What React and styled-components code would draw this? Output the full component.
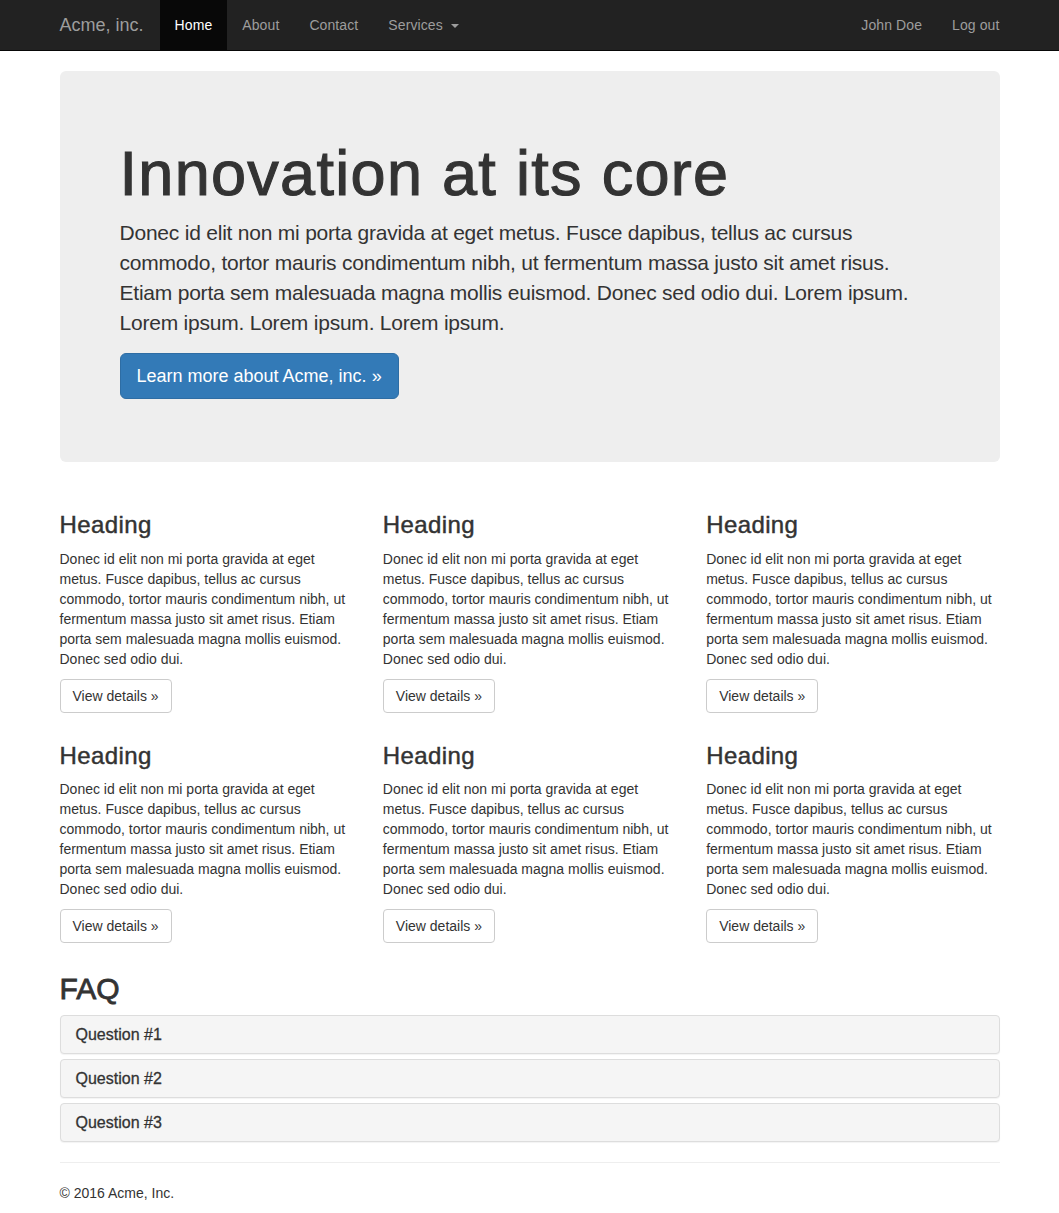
import React from "react";
import styled, { createGlobalStyle } from "styled-components";

const GlobalStyle = createGlobalStyle`
  * { box-sizing: border-box; }
  body {
    margin: 0;
    font-family: "Liberation Sans", Arial, Helvetica, sans-serif;
    font-size: 14px;
    line-height: 1.42857143;
    color: #333;
    background: #fff;
  }
`;

const Navbar = styled.nav`
  background: #222;
  border-bottom: 1px solid #080808;
  margin-bottom: 20px;
`;

const NavInner = styled.div`
  width: 970px;
  margin: 0 auto;
  padding: 0 15px;
  display: flex;
  height: 50px;
`;

const Brand = styled.a`
  font-size: 18px;
  line-height: 20px;
  padding: 15px 16px 15px 15px;
  margin-left: -15px;
  color: #9d9d9d;
  text-decoration: none;
`;

const NavList = styled.ul`
  display: flex;
  list-style: none;
  margin: 0;
  padding: 0;
  margin-left: ${(props) => (props.right ? "auto" : "0")};
  margin-right: ${(props) => (props.right ? "-15px" : "0")};
`;

const NavLink = styled.a`
  display: block;
  padding: 15px;
  line-height: 20px;
  letter-spacing: 0.1px;
  color: ${(props) => (props.$active ? "#fff" : "#9d9d9d")};
  background: ${(props) => (props.$active ? "#080808" : "transparent")};
  text-decoration: none;
`;

const Caret = styled.span`
  display: inline-block;
  width: 0;
  height: 0;
  margin-left: 4px;
  vertical-align: middle;
  border-top: 4px solid #9d9d9d;
  border-left: 4px solid transparent;
  border-right: 4px solid transparent;
`;

const Container = styled.div`
  width: 970px;
  margin: 0 auto;
  padding: 0 15px;
`;

const Jumbotron = styled.div`
  background: #eee;
  border-radius: 6px;
  padding: 48px 60px;
  margin-bottom: 30px;
`;

const Title = styled.h1`
  font-size: 63px;
  font-weight: 500;
  line-height: 1.1;
  letter-spacing: 1.3px;
  -webkit-text-stroke: 1.1px #333;
  margin: 20px 0 10px;
`;

const Lead = styled.p`
  font-size: 21px;
  font-weight: 300;
  line-height: 30px;
  letter-spacing: -0.22px;
  margin: 0 0 15px;
`;

const PrimaryButton = styled.a`
  display: inline-block;
  padding: 10px 16px;
  font-size: 18px;
  line-height: 1.3333333;
  letter-spacing: 0;
  border-radius: 6px;
  color: #fff;
  background: #337ab7;
  border: 1px solid #2e6da4;
  text-decoration: none;
`;

const Grid = styled.div`
  display: grid;
  grid-template-columns: repeat(3, 1fr);
  column-gap: 30px;
`;

const Col = styled.div``;

const Heading = styled.h3`
  font-size: 24px;
  font-weight: 500;
  line-height: 1.1;
  letter-spacing: 0.4px;
  -webkit-text-stroke: 0.45px #333;
  margin: 20px 0 10px;
`;

const Text = styled.p`
  margin: 0 0 10px;
`;

const DefaultButton = styled.a`
  display: inline-block;
  padding: 6px 12px;
  line-height: 20px;
  border: 1px solid #ccc;
  border-radius: 4px;
  background: #fff;
  color: #333;
  text-decoration: none;
`;

const SectionTitle = styled.h2`
  font-size: 30px;
  font-weight: 500;
  line-height: 1.1;
  -webkit-text-stroke: 0.8px #333;
  margin: 19px 0 10px;
`;

const PanelGroup = styled.div`
  display: flex;
  flex-direction: column;
  gap: 5px;
  margin-bottom: 20px;
`;

const Panel = styled.div`
  border: 1px solid #ddd;
  border-radius: 4px;
  background: #f5f5f5;
  box-shadow: 0 1px 1px rgba(0, 0, 0, 0.05);
  padding: 10px 15px;
`;

const PanelTitle = styled.h4`
  margin: 0;
  font-size: 16px;
  font-weight: 500;
  line-height: 17px;
  -webkit-text-stroke: 0.3px #333;
`;

const Rule = styled.hr`
  border: 0;
  border-top: 1px solid #eee;
  margin: 20px 0;
`;

const Footer = styled.footer`
  p { margin: 0 0 10px; }
`;

const blurb =
  "Donec id elit non mi porta gravida at eget metus. Fusce dapibus, tellus ac cursus commodo, tortor mauris condimentum nibh, ut fermentum massa justo sit amet risus. Etiam porta sem malesuada magna mollis euismod. Donec sed odio dui.";

const App = () => {
  return (
    <>
      <GlobalStyle />
      <Navbar>
        <NavInner>
          <Brand href="#">Acme, inc.</Brand>
          <NavList>
            <li><NavLink href="#" $active>Home</NavLink></li>
            <li><NavLink href="#">About</NavLink></li>
            <li><NavLink href="#">Contact</NavLink></li>
            <li><NavLink href="#">Services <Caret /></NavLink></li>
          </NavList>
          <NavList right>
            <li><NavLink href="#">John Doe</NavLink></li>
            <li><NavLink href="#">Log out</NavLink></li>
          </NavList>
        </NavInner>
      </Navbar>

      <Container>
        <Jumbotron>
          <Title>Innovation at its core</Title>
          <Lead>
            Donec id elit non mi porta gravida at eget metus. Fusce dapibus, tellus ac cursus
            commodo, tortor mauris condimentum nibh, ut fermentum massa justo sit amet risus.
            Etiam porta sem malesuada magna mollis euismod. Donec sed odio dui. Lorem ipsum.
            Lorem ipsum. Lorem ipsum. Lorem ipsum.
          </Lead>
          <Lead>
            <PrimaryButton href="#">Learn more about Acme, inc. »</PrimaryButton>
          </Lead>
        </Jumbotron>

        <Grid>
          {[0, 1, 2, 3, 4, 5].map((i) => (
            <Col key={i}>
              <Heading>Heading</Heading>
              <Text>{blurb}</Text>
              <Text><DefaultButton href="#">View details »</DefaultButton></Text>
            </Col>
          ))}
        </Grid>

        <SectionTitle>FAQ</SectionTitle>
        <PanelGroup>
          {["Question #1", "Question #2", "Question #3"].map((q) => (
            <Panel key={q}>
              <PanelTitle>{q}</PanelTitle>
            </Panel>
          ))}
        </PanelGroup>

        <Rule />
        <Footer>
          <p>© 2016 Acme, Inc.</p>
        </Footer>
      </Container>
    </>
  );
};

export default App;
